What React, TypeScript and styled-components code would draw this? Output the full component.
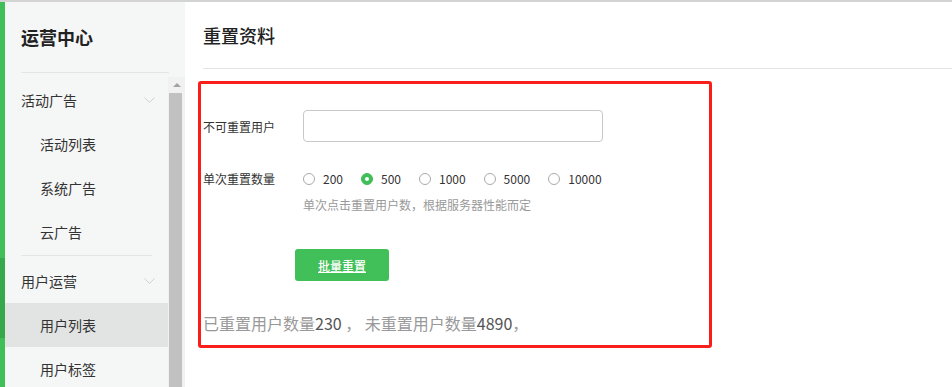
import styled, { createGlobalStyle } from 'styled-components';

const GlobalStyle = createGlobalStyle`
    html, body {
        margin: 0;
        padding: 0;
        background: #fff;
        overflow: hidden;
    }
    body {
        font-family: 'Noto Sans CJK SC', 'Liberation Sans', sans-serif;
        color: #333;
    }
`;

const Page = styled.div`
    display: flex;
    height: 387px;
    border-top: 2px solid #d3d3d3;
    box-sizing: border-box;
`;

const Rail = styled.div`
    width: 5px;
    display: flex;
    flex-direction: column;
    background-color: #40bf58;
`;
const RailMark = styled.div`
    margin-top: 256px;
    height: 80px;
    background-color: #36a94b;
`;

const Sidebar = styled.aside`
    width: 180px;
    background-color: #f5f6f6;
    display: flex;
    flex-direction: column;
`;
const SideTitle = styled.h1`
    margin: 0 16px;
    height: 70px;
    display: flex;
    align-items: center;
    font-size: 18px;
    font-weight: 700;
    color: #222;
    border-bottom: 1px solid #e4e5e5;
`;
const SideBody = styled.div`
    flex: 1;
    display: flex;
    margin-top: 4px;
    min-height: 0;
`;
const Menu = styled.ul`
    flex: 1;
    list-style: none;
    margin: 0;
    padding: 0;
    overflow: hidden;
`;
const Group = styled.li<{ divided?: boolean }>`
    margin-top: ${(p) => (p.divided ? '0' : '1px')};
`;
const Divider = styled.div`
    margin: 1px 16px 3px;
    height: 1px;
    background-color: #e4e5e5;
`;
const GroupHead = styled.div`
    height: 44px;
    padding: 0 13px 0 16px;
    display: flex;
    align-items: center;
    justify-content: space-between;
    font-size: 14px;
    color: #333;
`;
const Item = styled.div<{ active?: boolean }>`
    height: 44px;
    padding-left: 35px;
    display: flex;
    align-items: center;
    font-size: 14px;
    color: #333;
    background-color: ${(p) => (p.active ? '#e2e3e3' : 'transparent')};
`;
const Chevron = styled.svg`
    width: 11px;
    height: 7px;
`;

const Scrollbar = styled.div`
    width: 17px;
    background-color: #f1f1f1;
    display: flex;
    flex-direction: column;
    align-items: center;
`;
const ScrollArrow = styled.div`
    height: 16px;
    width: 100%;
    display: flex;
    align-items: center;
    justify-content: center;
    &::before {
        content: '';
        border-left: 4px solid transparent;
        border-right: 4px solid transparent;
        border-bottom: 4px solid #a3a3a3;
    }
`;
const ScrollThumb = styled.div`
    flex: 1;
    width: 13px;
    margin-left: -2px;
    background-color: #c1c1c1;
`;

const Main = styled.main`
    flex: 1;
    padding-left: 13px;
    display: flex;
    flex-direction: column;
`;
const Header = styled.div`
    margin-left: 5px;
    height: 66px;
    display: flex;
    align-items: center;
    font-size: 18px;
    font-weight: 500;
    color: #222;
    border-bottom: 1px solid #e4e4e4;
`;
const Frame = styled.section`
    margin-top: 12px;
    width: 514px;
    height: 267px;
    box-sizing: border-box;
    border: 3px solid #fa1e1a;
    border-radius: 3px;
    padding: 26px 0 0 2px;
    display: flex;
    flex-direction: column;
`;
const Row = styled.div<{ gap?: number }>`
    display: flex;
    align-items: center;
    margin-top: ${(p) => p.gap ?? 0}px;
`;
const Label = styled.label`
    width: 100px;
    font-size: 12px;
    color: #333;
`;
const TextInput = styled.input`
    width: 300px;
    height: 32px;
    box-sizing: border-box;
    border: 1px solid #c9c9c9;
    border-radius: 4px;
    outline: none;
`;
const RadioGroup = styled.div`
    display: flex;
    align-items: center;
`;
const RadioOption = styled.span`
    display: flex;
    align-items: center;
    margin-right: 18px;
    font-size: 12px;
    color: #333;
`;
const RadioDot = styled.span<{ checked?: boolean }>`
    width: 12px;
    height: 12px;
    box-sizing: border-box;
    border-radius: 50%;
    margin-right: 8px;
    border: 1px solid ${(p) => (p.checked ? '#40bf58' : '#aaa')};
    background-color: ${(p) => (p.checked ? '#40bf58' : '#fff')};
    display: flex;
    align-items: center;
    justify-content: center;
    &::after {
        content: '';
        width: 4px;
        height: 4px;
        border-radius: 50%;
        background-color: #fff;
        display: ${(p) => (p.checked ? 'block' : 'none')};
    }
`;
const Hint = styled.div`
    margin: 9px 0 0 100px;
    font-size: 12px;
    color: #999;
`;
const Button = styled.button`
    margin: 36px 0 0 92px;
    width: 94px;
    height: 32px;
    border: none;
    border-radius: 3px;
    background-color: #41bf58;
    color: #fff;
    font-family: inherit;
    font-size: 12px;
    font-weight: 500;
    text-decoration: underline;
`;
const Status = styled.p`
    margin: 30px 0 0;
    font-size: 16px;
    color: #999;
    span {
        color: #555;
    }
`;

const counts = ['200', '500', '1000', '5000', '10000'];

function Down() {
    return (
        <Chevron viewBox="0 0 11 7">
            <path d="M0.5 0.5 L5.5 5.5 L10.5 0.5" fill="none" stroke="#d0d0d0" strokeWidth="1" />
        </Chevron>
    );
}

export default function App() {
    return (
        <>
            <GlobalStyle />
            <Page>
                <Rail>
                    <RailMark />
                </Rail>
                <Sidebar>
                    <SideTitle>运营中心</SideTitle>
                    <SideBody>
                        <Menu>
                            <Group>
                                <GroupHead>
                                    活动广告
                                    <Down />
                                </GroupHead>
                                <Item>活动列表</Item>
                                <Item>系统广告</Item>
                                <Item>云广告</Item>
                            </Group>
                            <Group divided>
                                <Divider />
                                <GroupHead>
                                    用户运营
                                    <Down />
                                </GroupHead>
                                <Item active>用户列表</Item>
                                <Item>用户标签</Item>
                            </Group>
                        </Menu>
                        <Scrollbar>
                            <ScrollArrow />
                            <ScrollThumb />
                        </Scrollbar>
                    </SideBody>
                </Sidebar>
                <Main>
                    <Header>重置资料</Header>
                    <Frame>
                        <Row>
                            <Label>不可重置用户</Label>
                            <TextInput />
                        </Row>
                        <Row gap={28}>
                            <Label>单次重置数量</Label>
                            <RadioGroup>
                                {counts.map((c) => (
                                    <RadioOption key={c}>
                                        <RadioDot checked={c === '500'} />
                                        {c}
                                    </RadioOption>
                                ))}
                            </RadioGroup>
                        </Row>
                        <Hint>单次点击重置用户数，根据服务器性能而定</Hint>
                        <Button>批量重置</Button>
                        <Status>
                            已重置用户数量<span>230</span> ， 未重置用户数量<span>4890</span>，
                        </Status>
                    </Frame>
                </Main>
            </Page>
        </>
    );
}
